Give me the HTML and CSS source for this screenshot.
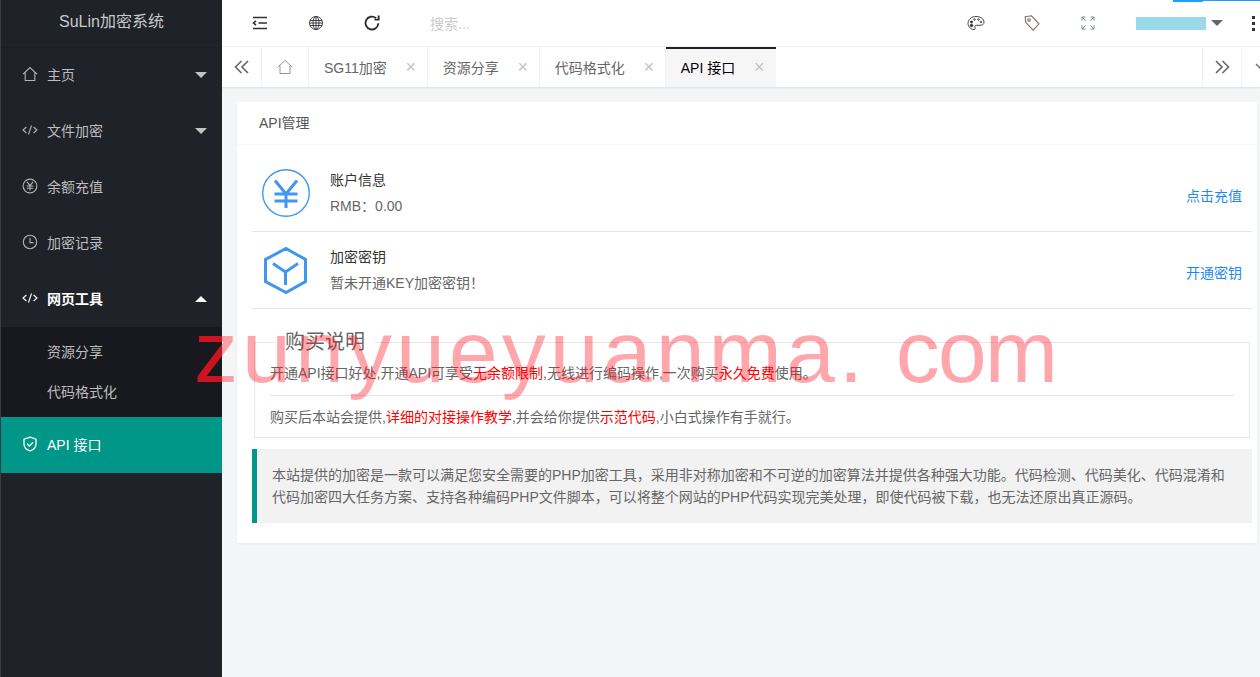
FILE: index.html
```html
<!DOCTYPE html>
<html lang="zh-CN">
  <head>
    <meta charset="UTF-8" />
    <meta name="viewport" content="width=device-width, initial-scale=1.0" />
    <title>API 接口</title>
    <link rel="stylesheet" href="styles.css">
  </head>
  <body>
    <!-- Sidebar -->
    <aside class="side">
      <div class="logo">SuLin加密系统</div>
      <ul class="nav">
        <li class="nav-item">
          <svg class="nav-icon" viewBox="0 0 16 16"><path d="M1 8.200 8 1.600l7 6.600M3.200 6.600v7.900h9.600V6.600"/></svg>
          <span>主页</span><i class="caret"></i>
        </li>
        <li class="nav-item">
          <svg class="nav-icon" viewBox="0 0 16 16"><path d="M4.400 5 1 8l3.400 3M11.600 5 15 8l-3.400 3M9.500 3.500 6.500 12.500"/></svg>
          <span>文件加密</span><i class="caret"></i>
        </li>
        <li class="nav-item">
          <svg class="nav-icon" viewBox="0 0 16 16"><circle cx="8" cy="8" r="6.900"/><path d="M5 3.800 8 7.600l3-3.800M4.800 8h6.400M4.800 10.200h6.400M8 7.600v5"/></svg>
          <span>余额充值</span>
        </li>
        <li class="nav-item">
          <svg class="nav-icon" viewBox="0 0 16 16"><circle cx="8" cy="8" r="6.700"/><path d="M8 3.800V8.600h3.600"/></svg>
          <span>加密记录</span>
        </li>
        <li class="nav-item open">
          <svg class="nav-icon" viewBox="0 0 16 16"><path d="M4.400 5 1 8l3.400 3M11.600 5 15 8l-3.400 3M9.500 3.500 6.500 12.500"/></svg>
          <span>网页工具</span><i class="caret up"></i>
        </li>
        <li class="sub">
          <a class="sub-item">资源分享</a>
          <a class="sub-item">代码格式化</a>
        </li>
        <li class="nav-item active">
          <svg class="nav-icon" viewBox="0 0 16 16"><path d="M8 1.200 14 3.200V8c0 3.600-2.600 5.800-6 7-3.400-1.200-6-3.400-6-7V3.200z"/><path d="M5 7.800 7.300 10l3.700-3.800"/></svg>
          <span>API 接口</span>
        </li>
      </ul>
    </aside>

    <div class="main">
      <!-- Header -->
      <header class="top">
        <div class="top-left">
          <span class="top-btn">
            <svg viewBox="0 0 16 16" class="ico dark heavy"><path d="M1 2.500h14M6.500 8H15M1 13.500h14"/><path d="M4 5.800 1.500 8 4 10.200"/></svg>
          </span>
          <span class="top-btn">
            <svg viewBox="0 0 16 16" class="ico dark thin"><circle cx="8" cy="8" r="6.500"/><ellipse cx="8" cy="8" rx="3" ry="6.500"/><path d="M8 1.500v13M2 5.500h12M2 10.500h12M1.500 8h13"/></svg>
          </span>
          <span class="top-btn">
            <svg viewBox="0 0 16 16" class="ico dark bold"><path d="M13.600 8.200A5.700 5.700 0 1 1 11.600 3.700"/><path d="M13.900 1.300v3.700h-3.700"/></svg>
          </span>
          <span class="search">搜索...</span>
        </div>
        <div class="top-right">
          <span class="top-btn">
            <svg viewBox="0 0 18 16" class="ico dark thin wide"><path d="M9 1.500C4.500 1.500 1 4.500 1 8.300c0 3.400 2.800 6.200 6 6.200 1.500 0 1.500-1.200 1-2-.6-1 .1-2.200 1.500-2.200h3.300c2.400 0 4.200-.9 4.200-3C17 3.800 13.500 1.500 9 1.500z"/><circle class="dot" cx="4.500" cy="7" r="1"/><circle class="dot" cx="4.500" cy="10.500" r="1.200"/><circle cx="7.500" cy="4.500" r=".8"/><circle cx="11.500" cy="4.500" r=".8"/><circle cx="14" cy="7" r=".8"/></svg>
          </span>
          <span class="top-btn">
            <svg viewBox="0 0 16 16" class="ico tag"><path d="M1.200 1.800 7.500.8l7.500 8-5.800 6.300-7.500-7.800z"/><circle cx="5" cy="5" r="1.300"/></svg>
          </span>
          <span class="top-btn">
            <svg viewBox="0 0 14 14" class="ico grey small"><path d="M1 4.500V1h3.500M1 1l3.500 3.500M13 4.500V1H9.500M13 1 9.500 4.500M1 9.500V13h3.500M1 13l3.500-3.500M13 9.500V13H9.500M13 13 9.500 9.500"/></svg>
          </span>
          <span class="user-box"></span>
          <i class="caret grey-caret"></i>
          <span class="more"><i></i><i></i><i></i></span>
        </div>
        <span class="load-bar"></span>
      </header>

      <!-- Tabs -->
      <div class="tabs">
        <span class="tab-ctrl">
          <svg viewBox="0 0 16 14" class="ico chev"><path d="M7.500 1 1.500 7l6 6M14 1 8 7l6 6"/></svg>
        </span>
        <span class="tab-home">
          <svg viewBox="0 0 16 16" class="ico home"><path d="M.8 8.200 8 1.400l7.200 6.800M3 6.800v7.700h10V6.800"/></svg>
        </span>
        <span class="tab">SG11加密<em class="close">×</em></span>
        <span class="tab">资源分享<em class="close">×</em></span>
        <span class="tab">代码格式化<em class="close">×</em></span>
        <span class="tab current">API 接口<em class="close">×</em></span>
        <span class="tab-space"></span>
        <span class="tab-ctrl">
          <svg viewBox="0 0 16 14" class="ico chev"><path d="M8.500 1l6 6-6 6M2 1l6 6-6 6"/></svg>
        </span>
        <span class="tab-end">
          <svg viewBox="0 0 12 8" class="ico end"><path d="M1 1l5 5 5-5"/></svg>
        </span>
      </div>

      <!-- Content -->
      <div class="content">
        <div class="card">
          <div class="card-head">API管理</div>
          <div class="card-body">
            <div class="row">
              <svg class="row-icon" viewBox="0 0 48 48"><circle class="fine" cx="24" cy="24" r="23.300"/><path d="M13 11.500 24 25l11-13.500M12.500 25h23M12.500 32h23M24 25v14"/></svg>
              <div class="row-text">
                <div class="row-title">账户信息</div>
                <div class="row-desc">RMB：0.00</div>
              </div>
              <a class="row-link">点击充值</a>
            </div>
            <div class="row">
              <svg class="row-icon" viewBox="0 0 48 48"><path d="M24 2.500 43.500 13.500v22L24 46.500 3.500 35.500v-22z"/><path d="M11 17.500 23.500 26l12.500-8.500M23.500 26v13"/></svg>
              <div class="row-text">
                <div class="row-title">加密密钥</div>
                <div class="row-desc">暂未开通KEY加密密钥！</div>
              </div>
              <a class="row-link">开通密钥</a>
            </div>

            <fieldset class="notice">
              <legend>购买说明</legend>
              <p class="notice-line first">开通API接口好处,开通API可享受<b>无余额限制</b>,无线进行编码操作,一次购买<b>永久免费</b>使用。</p>
              <p class="notice-line">购买后本站会提供,<b>详细的对接操作教学</b>,并会给你提供<b>示范代码</b>,小白式操作有手就行。</p>
            </fieldset>

            <blockquote class="quote">本站提供的加密是一款可以满足您安全需要的PHP加密工具，采用非对称加密和不可逆的加密算法并提供各种强大功能。代码检测、代码美化、代码混淆和代码加密四大任务方案、支持各种编码PHP文件脚本，可以将整个网站的PHP代码实现完美处理，即使代码被下载，也无法还原出真正源码。</blockquote>
          </div>
        </div>
      </div>
    </div>

    <!-- Watermark over the page -->
    <div class="watermark">zunyueyuanma. <span class="wm-end">com</span></div>
  </body>
</html>
```

FILE: styles.css
```css
/* General */
* {
  box-sizing: border-box;
}

html,
body {
  height: 100%;
}

body {
  margin: 0;
  display: flex;
  overflow: hidden;
  font-family: "Liberation Sans", "Noto Sans CJK SC", sans-serif;
  font-size: 14px;
  color: #666;
  background-color: #f4f5f7;
}

ul {
  list-style: none;
  margin: 0;
  padding: 0;
}

/* Sidebar */
.side {
  width: 222px;
  flex: none;
  background-color: #20222a;
  border-left: 1px solid #3a3d45;
  color: #bdbdbd;
}

.logo {
  height: 47px;
  line-height: 44px;
  text-align: center;
  font-size: 16px;
  color: #c9c9c9;
  box-shadow: 0 1px 0 #1d1f27;
}

.nav-item {
  position: relative;
  display: flex;
  align-items: center;
  height: 56px;
  padding: 0 0 2px 21px;
  gap: 9px;
}

.nav-icon {
  width: 16px;
  height: 16px;
  fill: none;
  stroke: #b4b4b4;
  stroke-width: 1.1;
}

.nav-item.open {
  color: #fff;
  font-weight: bold;
}

.nav-item.open .nav-icon {
  stroke: #fff;
}

.nav-item.active {
  background-color: #009688;
  color: #fff;
}

.nav-item.active .nav-icon {
  stroke: #fff;
  stroke-width: 1.3;
}

.caret {
  width: 0;
  height: 0;
  border-style: solid;
  border-width: 6px 6px 0;
  border-color: #c2c2c2 transparent transparent;
}

.nav-item .caret {
  position: absolute;
  right: 15px;
  top: 25px;
}

.nav-item .caret.up {
  border-width: 0 6px 6px;
  border-color: transparent transparent #fff;
}

.sub {
  background-color: #18191f;
  padding: 5px 0;
}

.sub-item {
  display: block;
  height: 40px;
  line-height: 40px;
  padding-left: 46px;
  color: #bdbdbd;
}

/* Header */
.main {
  flex: 1;
  min-width: 0;
  display: flex;
  flex-direction: column;
}

.top {
  position: relative;
  height: 47px;
  flex: none;
  display: flex;
  justify-content: space-between;
  background: #fff;
  border-bottom: 1px solid #f2f2f2;
}

.top-left,
.top-right {
  display: flex;
  align-items: center;
}

.top-left {
  padding-left: 10px;
}

.top-btn {
  width: 56px;
  display: flex;
  justify-content: center;
}

.ico {
  width: 16px;
  height: 16px;
  fill: none;
  stroke-width: 1.3;
}

.dark {
  stroke: #2f3036;
}

.thin {
  stroke-width: .9;
}

.heavy {
  stroke-width: 1.6;
}

.bold {
  width: 18px;
  height: 18px;
  stroke-width: 1.7;
}

.wide {
  width: 18px;
}

.ico .dot {
  fill: #2f3036;
}

.tag {
  stroke: #7d6f64;
  stroke-width: 1.1;
}

.grey {
  stroke: #7f8a99;
  stroke-width: 1;
}

.small {
  width: 14px;
  height: 14px;
}

.search {
  margin-left: 30px;
  color: #c9c9c9;
}

.top-right {
  padding-right: 5px;
}

.user-box {
  width: 70px;
  height: 13px;
  margin-left: 20px;
  background-color: #9ad9ea;
}

.grey-caret {
  margin-left: 5px;
  border-top-color: #666;
}

.more {
  display: flex;
  flex-direction: column;
  gap: 3px;
  margin-left: 29px;
}

.more i {
  width: 3px;
  height: 3px;
  background-color: #333;
}

.load-bar {
  position: absolute;
  top: 0;
  right: 0;
  width: 87px;
  height: 2px;
  background:
    linear-gradient(#1e9fff, #1e9fff) left top / 30px 2px no-repeat,
    linear-gradient(#1e9fff, #1e9fff) left top / 100% 1px no-repeat;
}

/* Tabs */
.tabs {
  height: 40px;
  flex: none;
  display: flex;
  background: #fff;
  box-shadow: 0 1px 2px rgba(0, 0, 0, 0.1);
  position: relative;
}

.tab-ctrl {
  width: 40px;
  flex: none;
  display: flex;
  align-items: center;
  justify-content: center;
  border-right: 1px solid #f2f2f2;
}

.tab-ctrl:nth-last-child(2) {
  border-left: 1px solid #f2f2f2;
}

.chev {
  stroke: #666;
  stroke-width: 1.6;
}

.tab-home {
  width: 47px;
  flex: none;
  display: flex;
  align-items: center;
  justify-content: center;
  border-right: 1px solid #f2f2f2;
}

.home {
  stroke: #8e949e;
  stroke-width: 1;
}

.tab {
  position: relative;
  flex: none;
  display: flex;
  align-items: center;
  padding: 0 10px 0 15px;
  border-right: 1px solid #f2f2f2;
  color: #666;
}

.tab.current {
  background-color: #f6f6f6;
  color: #000;
  border-right: 0;
  padding-right: 11px;
}

.tab.current::before {
  content: "";
  position: absolute;
  left: 0;
  right: 0;
  top: 0;
  height: 2px;
  background-color: #20222a;
}

.close {
  width: 12px;
  margin-left: 18px;
  font-style: normal;
  font-size: 18px;
  text-align: center;
  color: #c2c2c2;
}

.tab-space {
  flex: 1;
}

.tab-end {
  width: 18px;
  flex: none;
  padding: 16px 0 0 13px;
  overflow: hidden;
}

.end {
  width: 12px;
  height: 8px;
  stroke: #666;
  display: block;
}

/* Content */
.content {
  flex: 1;
  padding: 15px 3px 0 15px;
}

.card {
  background: #fff;
  box-shadow: 0 1px 2px rgba(0, 0, 0, 0.05);
}

.card-head {
  height: 43px;
  line-height: 42px;
  padding-left: 22px;
  border-bottom: 1px solid #f6f6f6;
  color: #555;
}

.card-body {
  padding: 10px 5px 20px 15px;
}

/* Rows */
.row {
  display: flex;
  align-items: center;
  height: 77px;
  padding: 0 10px;
  border-bottom: 1px solid #e6e6e6;
}

.row-icon {
  width: 48px;
  height: 48px;
  margin-right: 20px;
  fill: none;
  stroke: #3f97f0;
  stroke-width: 3;
}

.row-icon .fine {
  stroke-width: 1.4;
}

.row-text {
  flex: 1;
  line-height: 26px;
}

.row-title {
  color: #333;
}

.row-link {
  padding-top: 3px;
  color: #1e88f5;
}

/* Notice */
.notice {
  margin: 21px 2px 0;
  padding: 0 15px;
  height: 108px;
  border: 1px solid #e6e6e6;
}

.notice legend {
  margin-left: 5px;
  padding: 0 10px;
  font-size: 20px;
  line-height: 24px;
  color: #666;
}

.notice-line {
  margin: 0;
  height: 42px;
  line-height: 42px;
  white-space: nowrap;
}

.notice-line.first {
  line-height: 38px;
  border-bottom: 1px solid #e6e6e6;
}

.notice b {
  font-weight: normal;
  color: #ff0000;
}

/* Quote */
.quote {
  margin: 11px 0 0;
  padding: 15px;
  line-height: 22px;
  color: #666;
  background-color: #f2f2f2;
  border-left: 5px solid #009688;
}

/* Watermark */
.watermark {
  position: absolute;
  left: 194px;
  top: 302px;
  font-size: 88px;
  line-height: 100px;
  letter-spacing: 4px;
  white-space: pre;
  color: transparent;
  pointer-events: none;
  background-image: linear-gradient(to right, #cc1420 28px, rgba(255, 10, 25, 0.36) 28px);
  -webkit-background-clip: text;
  background-clip: text;
}

.wm-end {
  letter-spacing: -2px;
}
```
